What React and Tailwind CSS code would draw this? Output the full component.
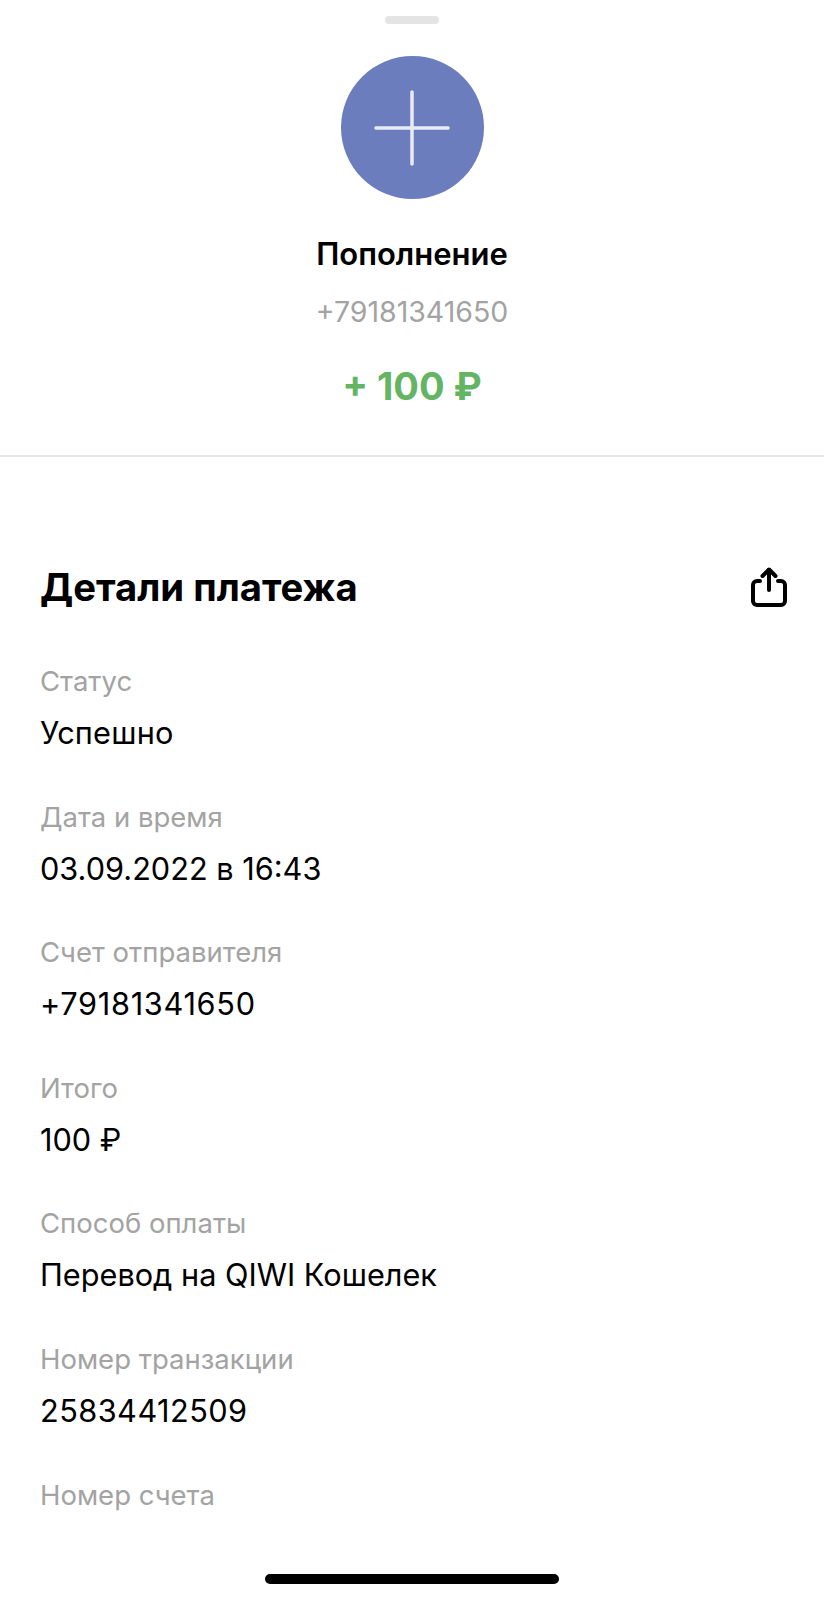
const rows = [
  { label: 'Статус', value: 'Успешно', cls: 'tracking-[0.2px]' },
  { label: 'Дата и время', value: '03.09.2022 в 16:43', cls: '' },
  { label: 'Счет отправителя', value: '+79181341650', cls: 'tracking-[0.7px]' },
  { label: 'Итого', value: '100 ₽', cls: '' },
  { label: 'Способ оплаты', value: 'Перевод на QIWI Кошелек', cls: '' },
  { label: 'Номер транзакции', value: '25834412509', cls: 'tracking-[0.45px]' },
]

function ShareIcon() {
  return (
    <svg width="36" height="40" viewBox="0 0 36 40" fill="none" stroke="#000" strokeWidth="4" strokeLinecap="round" strokeLinejoin="round">
      <path d="M18 23V3" />
      <path d="M11.5 9L18 2.5 24.500 9" />
      <path d="M9 14H6a4 4 0 0 0-4 4v16a4 4 0 0 0 4 4h24a4 4 0 0 0 4-4V18a4 4 0 0 0-4-4h-3" />
    </svg>
  )
}

export default function App() {
  return (
    <div className="relative h-[1600px] w-[824px] overflow-hidden bg-white font-['Inter',sans-serif]">
      <div className="flex h-[457px] flex-col items-center border-b-2 border-[#e6e6e6] pt-4">
        <div className="h-2 w-[54px] rounded-full bg-[#e4e4e4]" />
        <div className="relative mt-[32px] flex h-[143px] w-[143px] items-center justify-center rounded-full bg-[#6b7dbd]">
          <svg width="76" height="76" viewBox="0 0 76 76" stroke="#e8ebf6" strokeWidth="3.5" strokeLinecap="round">
            <path d="M38 2v72M2 38h72" />
          </svg>
        </div>
        <div className="mt-[37px] text-[31px] leading-[36px] font-semibold text-black">Пополнение</div>
        <div className="mt-[22px] text-[28.500px] leading-[36px] text-[#a3a3a3]">+79181341650</div>
        <div className="mt-[33px] text-[38px] leading-[46px] font-bold text-[#63b463]">+ 100 ₽</div>
      </div>
      <div className="px-10 pt-[107px]">
        <div className="flex items-center justify-between">
          <div className="text-[38.250px] leading-[46px] font-bold text-black">Детали платежа</div>
          <div className="mr-[-3px]">
            <ShareIcon />
          </div>
        </div>
        <div className="mt-[55px] flex flex-col gap-[49.600px]">
          {rows.map(({ label, value, cls }) => (
            <div key={label} className="flex flex-col gap-[17px]">
              <div className="text-[27.500px] leading-[33px] text-[#a3a3a3]">{label}</div>
              <div className={`text-[30.700px] leading-[36px] text-black ${cls}`}>{value}</div>
            </div>
          ))}
          <div className="text-[27.500px] leading-[33px] text-[#a3a3a3]">Номер счета</div>
        </div>
      </div>
      <div className="absolute bottom-[16px] left-[265px] h-[10px] w-[294px] rounded-full bg-black" />
    </div>
  )
}
